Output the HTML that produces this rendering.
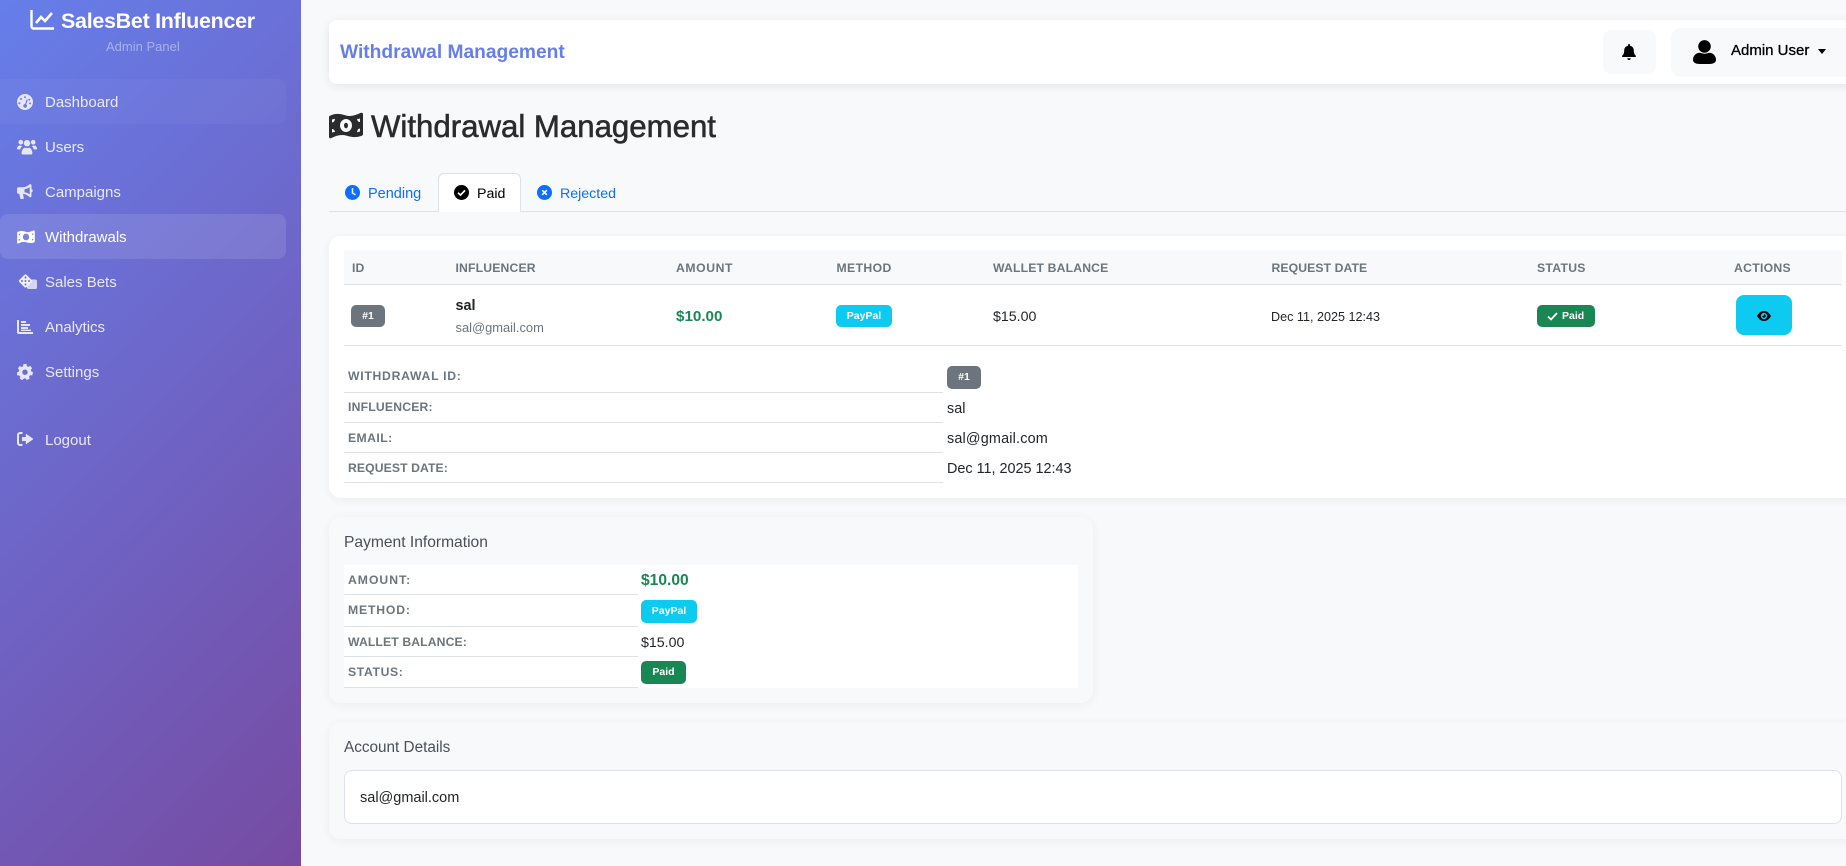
<!DOCTYPE html>
<html lang="en"><head><meta charset="utf-8"><title>Withdrawal Management</title>
<style>
*{box-sizing:border-box;margin:0;padding:0}
html,body{width:1846px;height:866px;overflow:hidden;background:#f8f9fa;font-family:"Liberation Sans",sans-serif;color:#212529}
.t{position:absolute;white-space:nowrap;line-height:20px;height:20px}
.b{position:absolute}
svg{position:absolute;display:block}
.side{position:absolute;left:0;top:0;width:301px;height:866px;background:linear-gradient(135deg,#667eea 0%,#764ba2 100%)}
.nav{color:rgba(255,255,255,.84);font-size:15px;left:45px}
.th{font-size:12.2px;font-weight:700;color:#6c757d;letter-spacing:.17px}
.lb{font-size:12.2px;font-weight:700;color:#6c757d;left:348px}
.badge{position:absolute;border-radius:5px;color:#fff;font-weight:700;font-size:10.5px;text-align:center;line-height:22px;height:22px}
.line{position:absolute;height:1px;background:#dee2e6}
.card{position:absolute;border-radius:12px;box-shadow:0 2px 10px rgba(0,0,0,.05)}
.tab{font-size:14.5px;color:#0d6efd}
</style></head><body>

<div class="side"></div>
<svg style="left:30px;top:9px" width="25" height="22" viewBox="0 0 25 22" fill="none" stroke="#fff" stroke-width="2.4"><path d="M1.5 1v16.5a2 2 0 0 0 2 2H24"/><path d="M6 14l5-6 4 4 7-8" stroke-width="2.6"/></svg>
<div class="t" style="left:61px;top:10px;font-size:21.5px;font-weight:700;color:#fff;line-height:22px;height:22px;letter-spacing:-.3px">SalesBet Influencer</div>
<div class="t" style="left:106px;top:37px;font-size:13px;color:rgba(255,255,255,.42)">Admin Panel</div>

<div class="b" style="left:0;top:79px;width:286px;height:45px;background:rgba(255,255,255,.035);border-radius:0 8px 8px 0"></div>
<div class="b" style="left:0;top:214px;width:286px;height:45px;background:rgba(255,255,255,.11);border-radius:8px"></div>

<svg style="left:17px;top:94px" width="16" height="16" viewBox="0 0 16 16"><path fill="#e6e6f8" fill-rule="evenodd" d="M8 0a8 8 0 1 1 0 16A8 8 0 0 1 8 0zM8 2.3a1 1 0 1 0 0 2 1 1 0 0 0 0-2zM4 4a1 1 0 1 0 0 2 1 1 0 0 0 0-2zM2.4 8.2a1 1 0 1 0 0 2 1 1 0 0 0 0-2zM12.2 4.6a1 1 0 1 0 0 2 1 1 0 0 0 0-2zM13 8.4a1 1 0 1 0 0 2 1 1 0 0 0 0-2zM9.6 5.4L8.2 10a1.9 1.9 0 1 0 1.1.4l1.5-4.6z"/></svg>
<div class="t nav" style="top:93px">Dashboard</div>

<svg style="left:17px;top:139px" width="20" height="16" viewBox="0 0 20 16"><g fill="#e6e6f8"><circle cx="3.8" cy="3.2" r="2.3"/><circle cx="16.2" cy="3.2" r="2.3"/><circle cx="10" cy="4.2" r="3.2"/><path d="M0 10c0-2 1-3.5 3-3.5 1 0 1.6.3 2.1.8C4 8.2 3.5 9.2 3.4 10.4H1A1 1 0 0 1 0 10zM20 10c0-2-1-3.5-3-3.5-1 0-1.6.3-2.1.8 1.1.9 1.6 1.9 1.7 3.1H19a1 1 0 0 0 1-.4zM4.6 14c0-3 2-5.4 3.4-5.4.7.3 1.3.5 2 .5s1.3-.2 2-.5c1.4 0 3.4 2.4 3.4 5.4a1.3 1.3 0 0 1-1.3 1.5H5.9a1.3 1.3 0 0 1-1.3-1.5z"/></g></svg>
<div class="t nav" style="top:138px">Users</div>

<svg style="left:17px;top:184px" width="16" height="16" viewBox="0 0 16 16"><path fill="#e6e6f8" fill-rule="evenodd" d="M13 0c.8 0 1.5.6 1.5 1.4V5a1.8 1.8 0 0 1 0 3.4V12c0 .8-.7 1.4-1.5 1.4-2.8-2.4-5-3.3-7-3.5l.8 4.1c.1.5-.3 1-.8 1H3.5L2.2 9.8H1.4C.6 9.800 0 9.200 0 8.400V4.600c0-.8.600-1.400 1.400-1.400H6C8.300 3.200 10.500 2 13 0zM12.700 3.200C11 4.400 9 5 7.500 5.200v3c1.500.2 3.500.8 5.200 2z"/></svg>
<div class="t nav" style="top:183px">Campaigns</div>

<svg style="left:17px;top:230px" width="18" height="14" viewBox="0 0 34 27"><path fill="#fff" fill-rule="evenodd" d="M0 5Q0 4 2 3.200C8 1 12 2 17 3.500S27 3 32 .8Q34 .5 34 2.500V22Q34 23.500 32 24C26 26 22 25 17 23.500S6 24 2 26.300Q0 26.500 0 24.500ZM17 7A6 6.500 0 1 0 17 20 6 6.500 0 1 0 17 7ZM3 7.500V10.500Q5.500 10.500 6 6.800ZM31 19.500V16.500Q28.500 16.500 28 20.200ZM3 17V20.500Q4.500 20 6 20 5.500 17 3 17ZM31 6.500V10Q28.500 10 28 7 29.500 7 31 6.500Z"/></svg>
<div class="t" style="left:45px;top:228px;font-size:15px;color:#fff">Withdrawals</div>

<svg style="left:18px;top:274px" width="19" height="15" viewBox="0 0 19 15"><rect x="9" y="5.500" width="10" height="9.500" rx="1.800" fill="#d5d5f2"/><rect x="2.400" y="1.900" width="10.200" height="10.200" rx="1.600" transform="rotate(45 7.500 7)" fill="#eeeefb"/><g fill="#6d68cf"><circle cx="7.500" cy="3.500" r=".95"/><circle cx="7.500" cy="7" r=".95"/><circle cx="7.500" cy="10.500" r=".95"/><circle cx="4" cy="7" r=".95"/><circle cx="11" cy="7" r=".95"/></g></svg>
<div class="t nav" style="top:273px">Sales Bets</div>

<svg style="left:17px;top:320px" width="16" height="14" viewBox="0 0 16 14"><g fill="#e6e6f8"><path d="M0 0h2v11.500a.5.500 0 0 0 .5.500H16v2H2a2 2 0 0 1-2-2z"/><rect x="4" y="1" width="5" height="2" rx=".3"/><rect x="4" y="4" width="9" height="2" rx=".3"/><rect x="4" y="7" width="7" height="2" rx=".3"/><rect x="4" y="9.600" width="10" height="1.400" rx=".3"/></g></svg>
<div class="t nav" style="top:317.500px">Analytics</div>

<svg style="left:17px;top:364px" width="16" height="16" viewBox="0 0 16 16"><path fill="#e6e6f8" fill-rule="evenodd" d="M6.500 0h3l.4 2.200 1.400.7 2-1 1.800 2.300-1.300 1.600.3 1.500 1.900 1-.7 2.900-2.200.1-1 1.300.5 2.100-2.700 1.300-1.500-1.600H7l-1.500 1.600L2.800 14.900l.5-2.100-1-1.300-2.200-.1L0 8.500l1.900-1 .3-1.500L.9 4.400 2.700 2l2 1 1.400-.7zM8 5.500a2.700 2.700 0 1 0 0 5.400 2.700 2.700 0 0 0 0-5.400z"/></svg>
<div class="t nav" style="top:362.500px">Settings</div>

<svg style="left:17px;top:432px" width="16" height="14" viewBox="0 0 16 14"><g fill="#e6e6f8"><path d="M5.500 0v2H3a1 1 0 0 0-1 1v8a1 1 0 0 0 1 1h2.500v2H3a3 3 0 0 1-3-3V3a3 3 0 0 1 3-3z"/><path d="M9.800 2.200L15.800 6.500a.6.600 0 0 1 0 1L9.800 11.800a.6.600 0 0 1-1-.5V9H5V5h3.800V2.700a.6.600 0 0 1 1-.5z"/></g></svg>
<div class="t nav" style="top:430.500px">Logout</div>

<!-- Top bar -->
<div class="card" style="left:329px;top:20px;width:1540px;height:64px;background:#fff;border-radius:8px;box-shadow:0 2px 10px rgba(0,0,0,.08)"></div>
<div class="t" style="left:340px;top:43px;font-size:19.2px;font-weight:700;color:#667eea">Withdrawal Management</div>
<div class="b" style="left:1603px;top:30px;width:53px;height:44px;background:#f8f9fa;border-radius:8px"></div>
<svg style="left:1622px;top:44px" width="14" height="16" viewBox="0 0 14 16"><path d="M7 0a1 1 0 0 1 1 1v.8c2.300.4 3.800 2.300 3.800 4.700 0 3.300 1.200 4.400 2 5.200.3.400.2 1.300-.6 1.300H.8c-.8 0-.9-.9-.6-1.300.8-.8 2-1.900 2-5.200C2.200 4.100 3.700 2.200 6 1.800V1a1 1 0 0 1 1-1zM5.300 14.300h3.400a1.700 1.700 0 0 1-3.400 0z"/></svg>
<div class="b" style="left:1671px;top:28px;width:190px;height:49px;background:#f8f9fa;border-radius:10px"></div>
<svg style="left:1693px;top:40px" width="23" height="24" viewBox="0 0 23 24"><circle cx="11.500" cy="6.400" r="6.300"/><path d="M7 12.800c3 1.200 6 1.200 9 0 4 0 7 3 7 7.200 0 2.600-3 4-6.500 4h-10C3 24 0 22.600 0 20c0-4.200 3-7.200 7-7.200z"/></svg>
<div class="t" style="left:1731px;top:41px;font-size:15px;color:#000;-webkit-text-stroke:.3px #000">Admin User</div>
<svg style="left:1818px;top:49px" width="8" height="5" viewBox="0 0 8 5"><path d="M0 0h8L4 5z"/></svg>

<!-- Heading -->
<svg style="left:329px;top:112px" width="34" height="27" viewBox="0 0 34 27"><path fill="#2b2b2b" fill-rule="evenodd" d="M0 5Q0 4 2 3.200C8 1 12 2 17 3.500S27 3 32 .8Q34 .5 34 2.500V22Q34 23.500 32 24C26 26 22 25 17 23.500S6 24 2 26.300Q0 26.500 0 24.500ZM17 7A6 6.500 0 1 0 17 20 6 6.500 0 1 0 17 7ZM3 7.500V10.500Q5.500 10.500 6 6.800ZM31 19.500V16.500Q28.500 16.500 28 20.200ZM3 17V20.500Q4.500 20 6 20 5.500 17 3 17ZM31 6.500V10Q28.500 10 28 7 29.500 7 31 6.500Z"/><ellipse cx="17" cy="13.500" rx="2" ry="2.800" fill="#2b2b2b"/></svg>
<div class="t" style="left:371px;top:107px;height:40px;line-height:40px;font-size:31.200px;color:#2b2b2b;-webkit-text-stroke:.55px #2b2b2b">Withdrawal Management</div>

<!-- Tabs -->
<div class="line" style="left:329px;top:211px;width:1517px"></div>
<div class="b" style="left:438px;top:173px;width:83px;height:39px;background:#fff;border:1px solid #dee2e6;border-bottom:0;border-radius:6px 6px 0 0"></div>
<svg style="left:345px;top:185px" width="15" height="15" viewBox="0 0 15 15"><circle cx="7.500" cy="7.500" r="7.500" fill="#0d6efd"/><path d="M7.500 3.200V8l3 1.800" fill="none" stroke="#fff" stroke-width="1.500"/></svg>
<div class="t tab" style="left:368px;top:184px">Pending</div>
<svg style="left:454px;top:185px" width="15" height="15" viewBox="0 0 15 15"><circle cx="7.500" cy="7.500" r="7.500"/><path d="M4 7.800l2.500 2.300 4.500-4.700" fill="none" stroke="#fff" stroke-width="1.700"/></svg>
<div class="t" style="left:477px;top:184px;font-size:14.200px;color:#000">Paid</div>
<svg style="left:537px;top:185px" width="15" height="15" viewBox="0 0 15 15"><circle cx="7.500" cy="7.500" r="7.500" fill="#0d6efd"/><path d="M5.200 5.200l4.600 4.600M9.800 5.200l-4.600 4.600" stroke="#fff" stroke-width="1.700"/></svg>
<div class="t tab" style="left:560px;top:184px;font-size:14.200px">Rejected</div>

<!-- Main card -->
<div class="card" style="left:329px;top:236px;width:1540px;height:262px;background:#fff"></div>
<div class="b" style="left:344px;top:250px;width:1498px;height:34px;background:#f8f9fa"></div>
<div class="line" style="left:344px;top:284px;width:1498px;background:#dee2e6"></div>
<div class="t th" style="left:352px;top:257.500px">ID</div>
<div class="t th" style="left:455.500px;top:257.500px">INFLUENCER</div>
<div class="t th" style="left:676px;top:257.500px;letter-spacing:.6px">AMOUNT</div>
<div class="t th" style="left:836.500px;top:257.500px;letter-spacing:.4px">METHOD</div>
<div class="t th" style="left:993px;top:257.500px">WALLET BALANCE</div>
<div class="t th" style="left:1271.500px;top:257.500px;letter-spacing:.1px">REQUEST DATE</div>
<div class="t th" style="left:1537px;top:257.500px;letter-spacing:.3px">STATUS</div>
<div class="t th" style="left:1734px;top:257.500px;letter-spacing:.3px">ACTIONS</div>

<div class="badge" style="left:351px;top:305px;width:34px;background:#6c757d">#1</div>
<div class="t" style="left:455.500px;top:296px;font-size:14.400px;font-weight:700;color:#212529">sal</div>
<div class="t" style="left:455.500px;top:318px;font-size:12.900px;color:#6c757d">sal@gmail.com</div>
<div class="t" style="left:676px;top:306.500px;font-size:15.200px;font-weight:700;color:#198754">$10.00</div>
<div class="badge" style="left:836px;top:305px;width:56px;background:#0dcaf0">PayPal</div>
<div class="t" style="left:993px;top:306.500px;font-size:14.200px;color:#212529">$15.00</div>
<div class="t" style="left:1271px;top:307px;font-size:12.600px;color:#212529">Dec 11, 2025 12:43</div>
<div class="badge" style="left:1537px;top:305px;width:58px;background:#198754;text-align:left;padding-left:25px">Paid</div>
<svg style="left:1547px;top:312px" width="11" height="9" viewBox="0 0 11 9"><path d="M1 4.500l3 3 6-6.500" fill="none" stroke="#fff" stroke-width="1.800"/></svg>
<div class="b" style="left:1736px;top:295px;width:56px;height:40px;background:#0dcaf0;border-radius:8px"></div>
<svg style="left:1757px;top:310px" width="14" height="12" viewBox="0 0 14 12"><path fill-rule="evenodd" d="M7 1c3.200 0 5.700 2.500 7 5-1.300 2.500-3.800 5-7 5S1.300 8.500 0 6c1.300-2.500 3.800-5 7-5zM7 2.800a3.200 3.200 0 1 0 0 6.400 3.200 3.200 0 0 0 0-6.400zM7 4.300a1.700 1.700 0 1 1-1.700 1.700c.8.300 1.900-.7 1.700-1.700z"/></svg>
<div class="line" style="left:344px;top:345px;width:1498px"></div>

<div class="t lb" style="top:366px;letter-spacing:.73px">WITHDRAWAL ID:</div>
<div class="t lb" style="top:397px;letter-spacing:.2px">INFLUENCER:</div>
<div class="t lb" style="top:427.500px;letter-spacing:.43px">EMAIL:</div>
<div class="t lb" style="top:457.500px;letter-spacing:.1px">REQUEST DATE:</div>
<div class="line" style="left:344px;top:392px;width:599px"></div>
<div class="line" style="left:344px;top:422px;width:599px"></div>
<div class="line" style="left:344px;top:452px;width:599px"></div>
<div class="line" style="left:344px;top:482px;width:599px"></div>
<div class="badge" style="left:947px;top:366px;width:34px;height:23px;line-height:23px;background:#6c757d">#1</div>
<div class="t" style="left:947px;top:399px;font-size:14.400px">sal</div>
<div class="t" style="left:947px;top:429px;font-size:14.400px;letter-spacing:.18px">sal@gmail.com</div>
<div class="t" style="left:947px;top:458.500px;font-size:14.400px">Dec 11, 2025 12:43</div>

<!-- Payment card -->
<div class="card" style="left:329px;top:517px;width:764px;height:186px;background:#f8f9fa"></div>
<div class="t" style="left:344px;top:533px;font-size:15.600px;color:#495057">Payment Information</div>
<div class="b" style="left:344px;top:565px;width:734px;height:123px;background:#fff"></div>
<div class="t lb" style="top:569.500px;letter-spacing:1px">AMOUNT:</div>
<div class="t lb" style="top:599.500px;letter-spacing:.84px">METHOD:</div>
<div class="t lb" style="top:631.500px;letter-spacing:.12px">WALLET BALANCE:</div>
<div class="t lb" style="top:661.500px;letter-spacing:.64px">STATUS:</div>
<div class="line" style="left:344px;top:594px;width:294px"></div>
<div class="line" style="left:344px;top:626px;width:294px"></div>
<div class="line" style="left:344px;top:656px;width:294px"></div>
<div class="line" style="left:344px;top:687px;width:294px"></div>
<div class="t" style="left:641px;top:571px;font-size:15.600px;font-weight:700;color:#198754">$10.00</div>
<div class="badge" style="left:641px;top:600px;width:56px;height:23px;line-height:23px;background:#0dcaf0">PayPal</div>
<div class="t" style="left:641px;top:632.500px;font-size:14.200px">$15.00</div>
<div class="badge" style="left:641px;top:661px;width:45px;height:23px;line-height:23px;background:#198754">Paid</div>

<!-- Account card -->
<div class="card" style="left:329px;top:722px;width:1540px;height:117px;background:#f8f9fa"></div>
<div class="t" style="left:344px;top:738px;font-size:15.300px;color:#495057">Account Details</div>
<div class="b" style="left:344px;top:770px;width:1498px;height:54px;background:#fff;border:1px solid #dee2e6;border-radius:8px"></div>
<div class="t" style="left:360px;top:788px;font-size:14.500px">sal@gmail.com</div>

</body></html>
